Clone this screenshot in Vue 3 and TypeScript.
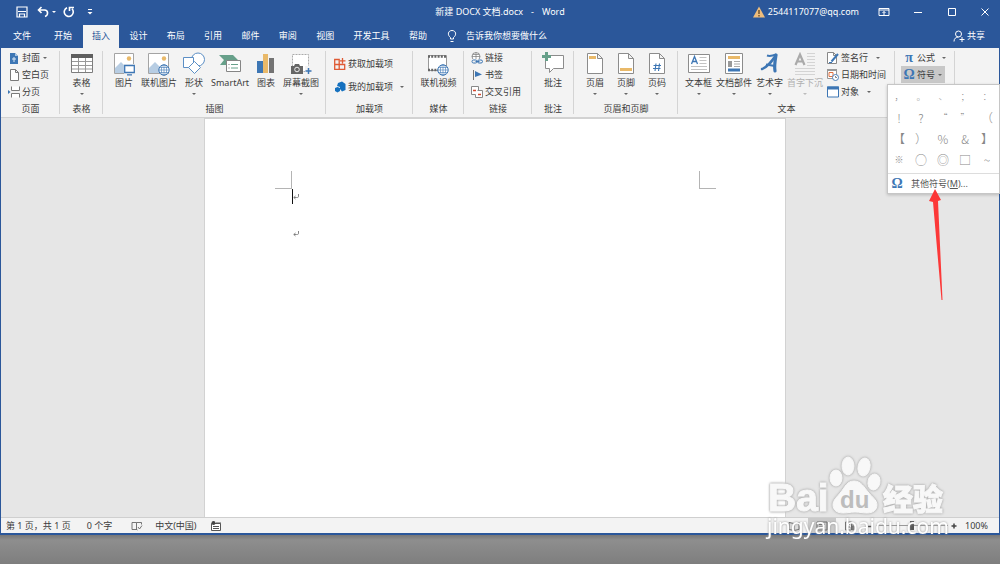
<script setup lang="ts">
import { ref } from 'vue'

interface Tool {
  icon: string
  label: string
  caret?: boolean
  disabled?: boolean
}

const activeTab = ref('插入')
const leadTabs: string[] = ['文件', '开始']
const tabs: string[] = ['插入', '设计', '布局', '引用', '邮件', '审阅', '视图', '开发工具', '帮助']

const pageTools: Tool[] = [
  { icon: 'cover', label: '封面', caret: true },
  { icon: 'blank', label: '空白页' },
  { icon: 'break', label: '分页' },
]
const tableTools: Tool[] = [{ icon: 'table', label: '表格', caret: true }]
const illustrationTools: Tool[] = [
  { icon: 'picture', label: '图片' },
  { icon: 'online-picture', label: '联机图片' },
  { icon: 'shapes', label: '形状', caret: true },
  { icon: 'smartart', label: 'SmartArt' },
  { icon: 'chart', label: '图表' },
  { icon: 'screenshot', label: '屏幕截图', caret: true },
]
const addinTools: Tool[] = [
  { icon: 'store', label: '获取加载项' },
  { icon: 'addins', label: '我的加载项', caret: true },
]
const mediaTools: Tool[] = [{ icon: 'video', label: '联机视频' }]
const linkTools: Tool[] = [
  { icon: 'link', label: '链接' },
  { icon: 'bookmark', label: '书签' },
  { icon: 'crossref', label: '交叉引用' },
]
const commentTools: Tool[] = [{ icon: 'comment', label: '批注' }]
const headerTools: Tool[] = [
  { icon: 'header', label: '页眉', caret: true },
  { icon: 'footer', label: '页脚', caret: true },
  { icon: 'pagenum', label: '页码', caret: true },
]
const textTools: Tool[] = [
  { icon: 'textbox', label: '文本框', caret: true },
  { icon: 'parts', label: '文档部件', caret: true },
  { icon: 'wordart', label: '艺术字', caret: true },
  { icon: 'dropcap', label: '首字下沉', caret: true, disabled: true },
]
const textSideTools: Tool[] = [
  { icon: 'signature', label: '签名行', caret: true },
  { icon: 'datetime', label: '日期和时间' },
  { icon: 'object', label: '对象', caret: true },
]

interface Group {
  name: string
  kind: string
  big?: Tool[]
  small?: Tool[]
}

const groups: Group[] = [
  { name: '页面', kind: 'pages', small: pageTools },
  { name: '表格', kind: 'tables', big: tableTools },
  { name: '插图', kind: 'illustrations', big: illustrationTools },
  { name: '加载项', kind: 'addins', small: addinTools },
  { name: '媒体', kind: 'media', big: mediaTools },
  { name: '链接', kind: 'links', small: linkTools },
  { name: '批注', kind: 'comments', big: commentTools },
  { name: '页眉和页脚', kind: 'headers', big: headerTools },
  { name: '文本', kind: 'text', big: textTools, small: textSideTools },
]

const symbols: string[] = [
  '，', '。', '、', '；', '：',
  '!', '?', '“', '”', '（',
  '【', '）', '%', '&', '】',
  '※', '○', '◎', '□', '~',
]
const tinySymbols = ['，', '。', '、', '；', '：', '“', '”', '※']
const zoomLevel = ref(100)
</script>

<template>
  <svg class="sprite" aria-hidden="true">
    <symbol id="i-cover" viewBox="0 0 12 12"><path d="M2 1h5l3 3v8H2z" fill="#3d76b4" /><path d="M7 1v3h3" fill="#a9c5e2" /><path d="M4 7h4M6 5v5" stroke="#dbe8f5" fill="none" /></symbol>
    <symbol id="i-blank" viewBox="0 0 12 12"><path d="M2.500.5h5l3 3v8h-8zM7.500.5v3h3" fill="#fff" stroke="#7a7a7a" /></symbol>
    <symbol id="i-break" viewBox="0 0 12 12"><path d="M3.500.5v4h8v-4M3.500 11.500v-4h8v4" fill="#fff" stroke="#7a7a7a" /><path d="M0 4l2.500 2L0 8z" fill="#3d76b4" /></symbol>
    <symbol id="i-table" viewBox="0 0 22 24"><path d="M.5 2.500h21v18H.5z" fill="#fff" stroke="#7d7d7d" /><path d="M0 2h22v4H0z" fill="#5f5f5f" /><path d="M1 9.500h20M1 13.500h20M1 17h20M7.500 6v14M14.500 6v14" stroke="#999" fill="none" /></symbol>
    <symbol id="i-picture" viewBox="0 0 22 24"><path d="M1.500 1.500h19v20h-19z" fill="#fff" stroke="#a4a4a4" /><path d="M2 21v-5l6-6 5 5v6z" fill="#b7cde3" /><circle cx="16" cy="6.500" r="2.200" fill="#e9b969" /><path d="M11 12h11v10H11z" fill="#f3f3f3" /><path d="M11.700 13.500h9.600v7h-9.600zM14 22.800h5" fill="#fff" stroke="#3d76b4" stroke-width="1.300" /></symbol>
    <symbol id="i-globe" viewBox="0 0 12 12"><circle cx="6" cy="6" r="5.200" fill="#fff" stroke="#3d76b4" /><path d="M6 .8v10.400M.8 6h10.400M1.700 3.500h8.600M1.700 8.500h8.600" stroke="#3d76b4" stroke-width=".6" /><ellipse cx="6" cy="6" rx="2.600" ry="5.200" fill="none" stroke="#3d76b4" stroke-width=".6" /></symbol>
    <symbol id="i-online-picture" viewBox="0 0 22 24"><path d="M.5 1.500h20v20H.5z" fill="#fff" stroke="#a4a4a4" /><path d="M1 21v-5l6-6 5 5v6z" fill="#b7cde3" /><circle cx="16" cy="6.500" r="2.200" fill="#e9b969" /><use href="#i-globe" x="10" y="12" width="12" height="12" /></symbol>
    <symbol id="i-shapes" viewBox="0 0 22 24"><circle cx="15" cy="7.500" r="6.500" fill="#fff" stroke="#5c8fc5" /><path d="M.5 5.500h10v10H.5z" fill="#fff" stroke="#5c8fc5" /><path d="M11.500 9.500l6 6-6 6-6-6z" fill="#fff" stroke="#5c8fc5" /></symbol>
    <symbol id="i-smartart" viewBox="0 0 22 24"><path d="M0 3h14l5 5H8v5H1l4-5z" fill="#67a08a" /><path d="M7.500 8.500h14v11h-14z" fill="#fff" stroke="#858585" /><path d="M12 12.500h7M12 16h7" stroke="#67a08a" /><path d="M9.500 12.500h1M9.500 16h1" stroke="#777" /></symbol>
    <symbol id="i-chart" viewBox="0 0 22 24"><path d="M2 9h6v12H2z" fill="#3d76b4" /><path d="M8 2h5v19H8z" fill="#e9b969" /><path d="M14 6h5v15h-5z" fill="#737373" /></symbol>
    <symbol id="i-screenshot" viewBox="0 0 22 24"><path d="M2.500 2.500h16v17h-16z" fill="#fff" stroke="#aaa" stroke-dasharray="2 1" /><path d="M1 14h3l1-2h4l1 2h3v8H1z" fill="#666" /><circle cx="7" cy="17.500" r="2.300" fill="#666" stroke="#eee" /><path d="M15 14h7v9h-7z" fill="#f3f3f3" /><path d="M15.500 19h6M18.500 16v6" stroke="#3d76b4" stroke-width="1.500" /></symbol>
    <symbol id="i-store" viewBox="0 0 12 12"><path d="M.7 1.500h4.500v10H.7zM.7 6.500h10v5H.7zM8.500 0v5.500M6 2.800h5.500" fill="none" stroke="#df5a34" stroke-width="1.300" /></symbol>
    <symbol id="i-addins" viewBox="0 0 12 12"><path d="M4 2l4-1.500L11.500 3v6L8 10.500 6 8V6L3 5z" fill="#1571bf" /><path d="M1 7l2.500-1L6 7v3l-2.500 1.500L1 10z" fill="#1571bf" /></symbol>
    <symbol id="i-video" viewBox="0 0 22 24"><path d="M1.500 3.500h18v15h-18z" fill="#fff" stroke="#999" /><path d="M1 4.500h19M1 18h19" stroke="#666" stroke-width="2.500" stroke-dasharray="2 1.200" /><use href="#i-globe" x="10" y="12" width="12" height="12" /></symbol>
    <symbol id="i-link" viewBox="0 0 12 12"><circle cx="5" cy="4.500" r="4" fill="#fff" stroke="#777" stroke-width=".8" /><path d="M5 .5v8M1 4.500h8M2 2.500h6" stroke="#777" stroke-width=".7" /><path d="M1 7h10v5H1z" fill="#f1f1f1" /><rect x="1" y="8" width="5" height="3" rx="1.500" fill="none" stroke="#3d76b4" /><rect x="6.500" y="8" width="5" height="3" rx="1.500" fill="none" stroke="#3d76b4" /><path d="M4.500 9.500h4" stroke="#3d76b4" /></symbol>
    <symbol id="i-bookmark" viewBox="0 0 12 12"><path d="M2.500 1v10" stroke="#777" /><path d="M4 2l7 3.500L4 8z" fill="#3d76b4" /></symbol>
    <symbol id="i-crossref" viewBox="0 0 12 12"><path d="M.5.5h7v8h-7z" fill="#fff" stroke="#888" /><path d="M6.500 4.500h5v7h-7v-3" fill="#fff" stroke="#888" /><path d="M2 4.500h3M7 8.500h3" stroke="#d8492f" stroke-width="1.500" /></symbol>
    <symbol id="i-comment" viewBox="0 0 22 24"><path d="M3.500 3.500h18v13h-10l-4 4v-4h-4z" fill="#fff" stroke="#8c8c8c" /><path d="M4.500 0v9M0 4.500h9" stroke="#67a08a" stroke-width="3" /></symbol>
    <symbol id="i-sheet" viewBox="0 0 22 24"><path d="M3.500 1.500h10l5 5v15h-15zM13.500 1.500v5h5" fill="#fff" stroke="#8c8c8c" /></symbol>
    <symbol id="i-header" viewBox="0 0 22 24"><use href="#i-sheet" width="22" height="24" /><path d="M5 4h7v3H5z" fill="#e9b969" /></symbol>
    <symbol id="i-footer" viewBox="0 0 22 24"><use href="#i-sheet" width="22" height="24" /><path d="M5 16h12v3H5z" fill="#e9b969" /></symbol>
    <symbol id="i-pagenum" viewBox="0 0 22 24"><use href="#i-sheet" width="22" height="24" /><path d="M10 11.500L9 19M13.500 11.500l-1 7.500M7.500 13.500h7.500M7 16.500h7.500" stroke="#3d76b4" stroke-width="1.100" /></symbol>
    <symbol id="i-textbox" viewBox="0 0 22 24"><path d="M.5 2.500h21v18H.5z" fill="#fff" stroke="#8c8c8c" /><path d="M3.500 12L6.500 4.500l3 7.500M4.500 9.500h4" fill="none" stroke="#3d76b4" stroke-width="1.300" /><path d="M11.500 5.500h7M11.500 8.500h7M11.500 11.500h7M3 14.500h16M3 17.500h16" stroke="#c2c2c2" /></symbol>
    <symbol id="i-parts" viewBox="0 0 22 24"><path d="M2.500 1.500h17v20h-17z" fill="#fff" stroke="#8c8c8c" /><path d="M5 4h12v3H5z" fill="#e9b969" /><path d="M5 9h4v6H5z" fill="#999" /><path d="M11 9.500h6M11 12h6M11 14.500h6" stroke="#aaa" /><path d="M5 16.500h12v3H5z" fill="#3d76b4" /></symbol>
    <symbol id="i-wordart" viewBox="0 0 22 24"><path d="M3 17C9 15 13 9 17 3" fill="none" stroke="#3d76b4" stroke-width="2.400" stroke-linecap="round" /><path d="M17 3c-1 6-2 11-1 16" fill="none" stroke="#3d76b4" stroke-width="3.200" stroke-linecap="round" /><path d="M8 3.500c3 1 5 .5 9-1M7 12.500l9 1.500" stroke="#3d76b4" stroke-width="2" fill="none" /></symbol>
    <symbol id="i-dropcap" viewBox="0 0 22 24"><path d="M1.500 13L6 2.500 10.500 13M3 9.500h6" fill="none" stroke="#aaa" stroke-width="2.200" /><path d="M13 1.500h8M13 4.500h8M13 7.500h8M13 10.500h8M13 13.500h8M1 16.500h20M1 19.500h20M1 22.500h20" stroke="#d4d4d4" /></symbol>
    <symbol id="i-signature" viewBox="0 0 12 12"><path d="M.5.5h6l3 3v8h-9zM6.500.5v3h3" fill="#fff" stroke="#888" /><path d="M4.500 9.500L11 2" stroke="#3d76b4" stroke-width="2" /><path d="M2 10.500h3" stroke="#3d76b4" /></symbol>
    <symbol id="i-datetime" viewBox="0 0 12 12"><path d="M.5.500h9v9h-9z" fill="#fff" stroke="#999" /><path d="M0 0h10v2H0z" fill="#999" /><path d="M2 3.500h4v4H2z" fill="#fff" stroke="#e2703f" /><circle cx="8.500" cy="8.500" r="3" fill="#fff" stroke="#3d76b4" stroke-width=".9" /><path d="M8.500 7v1.500H10" fill="none" stroke="#666" stroke-width=".8" /></symbol>
    <symbol id="i-object" viewBox="0 0 12 12"><path d="M.5 1h11v10H.5z" fill="#fff" stroke="#3d76b4" /><path d="M0 .5h12v3H0z" fill="#3d76b4" /></symbol>
  </svg>

  <div class="desktop">
    <div class="window">
      <header class="titlebar">
        <div class="quick">
          <button class="quick-btn" aria-label="保存"><svg width="12" height="12" viewBox="0 0 12 12" fill="none" stroke="#fff" stroke-width="1.200"><path d="M1 1h10v10H1zM2 5.500h8M3.500 11V8h5v3" /></svg></button>
          <button class="quick-btn undo" aria-label="撤消"><svg width="12" height="12" viewBox="0 0 12 12" fill="none" stroke="#fff" stroke-width="1.600"><path d="M4.500 1L1.500 4l3 3M2 4h5.500c4 0 4 5.500.5 6.500" /></svg><i class="caret"></i></button>
          <button class="quick-btn redo" aria-label="重复"><svg width="12" height="12" viewBox="0 0 12 12" fill="none" stroke="#fff" stroke-width="1.600"><path d="M4 1.800a4.500 4.500 0 1 0 5 1M6.500 5V1.500H11" /></svg></button>
          <button class="quick-btn" aria-label="自定义快速访问工具栏"><svg width="6" height="6" viewBox="0 0 6 6"><path d="M1 .5h4" stroke="#fff" /><path d="M.5 3h5L3 5.500z" fill="#fff" /></svg></button>
        </div>
        <div class="doc-title"><span>新建 DOCX 文档.docx</span><span>-</span><span>Word</span></div>
        <div class="account">
          <svg class="warn" width="12" height="12" viewBox="0 0 12 12"><path d="M6 .5L12 11.500H0z" fill="#eebd7c" /><path d="M6 4v4M6 9v1.500" stroke="#5c4526" stroke-width="1.300" /></svg>
          <span class="email">2544117077@qq.com</span>
          <button class="win-btn" aria-label="功能区显示选项"><svg width="12" height="10" viewBox="0 0 12 10" fill="none" stroke="#fff"><path d="M1 1.500h10v7H1zM1 3h10M6 8V4.500M4.500 6L6 4.500 7.500 6" /></svg></button>
          <button class="win-btn" aria-label="最小化"><svg width="10" height="10" viewBox="0 0 10 10"><path d="M1 5.500h8" stroke="#fff" /></svg></button>
          <button class="win-btn" aria-label="最大化"><svg width="10" height="10" viewBox="0 0 10 10"><path d="M1.500 1.500h7v7h-7z" fill="none" stroke="#fff" /></svg></button>
          <button class="win-btn" aria-label="关闭"><svg width="10" height="10" viewBox="0 0 10 10"><path d="M1.500 1.500l7 7M8.500 1.500l-7 7" stroke="#fff" /></svg></button>
        </div>
      </header>

      <nav class="tabbar">
        <div class="lead">
          <button v-for="t in leadTabs" :key="t" class="tab" :class="{ active: activeTab === t }" @click="activeTab = t">{{ t }}</button>
        </div>
        <div class="tabs">
          <button v-for="t in tabs" :key="t" class="tab" :class="{ active: activeTab === t }" @click="activeTab = t">{{ t }}</button>
        </div>
        <button class="tell">
          <svg width="10" height="14" viewBox="0 0 10 14" fill="none" stroke="#fff"><path d="M3.500 10V8.500C0 6 1 1.500 5 1.500s5 4.500 1.500 7V10zM3.500 12.500h3" /></svg>
          告诉我你想要做什么
        </button>
        <button class="share">
          <svg width="12" height="12" viewBox="0 0 12 12" fill="none" stroke="#fff"><circle cx="5.500" cy="4" r="3" /><path d="M1 11.500c0-3 2-4.500 4.500-4.500M9 7v5M6.500 9.500h5" /></svg>
          共享
        </button>
      </nav>

      <div class="ribbon">
        <section v-for="g in groups" :key="g.kind" class="group" :class="g.kind">
          <div class="tools">
            <button v-for="t in g.big" :key="t.label" class="big" :class="{ off: t.disabled }" :disabled="t.disabled">
              <svg width="22" height="24"><use :href="'#i-' + t.icon" width="22" height="24" /></svg>
              <span>{{ t.label }}</span>
              <i v-if="t.caret" class="caret"></i>
            </button>
            <div v-if="g.small" class="stack">
              <button v-for="t in g.small" :key="t.label" class="small">
                <svg width="12" height="12"><use :href="'#i-' + t.icon" width="12" height="12" /></svg>
                <span>{{ t.label }}</span>
                <i v-if="t.caret" class="caret"></i>
              </button>
            </div>
          </div>
          <div class="group-name">{{ g.name }}</div>
        </section>
        <section class="group symbols">
          <div class="stack">
            <button class="small"><b class="greek">π</b><span>公式</span><i class="caret"></i></button>
            <button class="small pressed"><b class="greek">Ω</b><span>符号</span><i class="caret"></i></button>
          </div>
        </section>
        <div class="symbol-menu">
          <div class="symbol-grid">
            <button v-for="s in symbols" :key="s" class="symbol" :class="{ tiny: tinySymbols.includes(s) }">{{ s }}</button>
          </div>
          <button class="more"><b class="greek">Ω</b><span>其他符号(<u>M</u>)...</span></button>
        </div>
      </div>

      <main class="workspace">
        <article class="page">
          <div class="margins"><i class="mark left"></i><i class="mark right"></i></div>
          <p v-for="n in 2" :key="n" class="para" :class="{ current: n === 1 }">
            <svg width="6" height="6" viewBox="0 0 6 6" fill="none" stroke="#777" stroke-width=".9"><path d="M5.500 0v2.500c0 1-1 1-2 1H.8M2.500 2L.8 3.500l1.700 1.500" /></svg>
          </p>
        </article>
      </main>

      <footer class="status">
        <span class="pages-count">第 1 页，共 1 页</span>
        <span class="words">0 个字</span>
        <svg class="proof" width="12" height="10" viewBox="0 0 12 10" fill="none" stroke="#666" stroke-width=".9"><path d="M5.500 9V1.500H1V8.500h4.500l1 .5M5.500 1.500h5v2M7 6l1.500 2L11 4.500" /></svg>
        <span>中文(中国)</span>
        <svg class="macro" width="10" height="10" viewBox="0 0 10 10"><path d="M.5 2.500h9v7h-9z" fill="#fff" stroke="#555" /><circle cx="2.500" cy="2" r="2" fill="#444" /><path d="M5 2h5M2 5.500h6M2 7.500h6" stroke="#555" /></svg>
        <div class="views">
          <button class="view" aria-label="阅读视图"><svg width="12" height="10" viewBox="0 0 12 10" fill="#ddd" stroke="#666"><path d="M1 1.500l5 1 5-1v7l-5 1-5-1zM6 2.500v7" /></svg></button>
          <button class="view on" aria-label="页面视图"><svg width="12" height="10" viewBox="0 0 12 10" fill="none" stroke="#666"><path d="M1 1h10v8H1zM3 3.500h6M3 6h6" /></svg></button>
          <button class="view" aria-label="Web 版式视图"><svg width="12" height="10" viewBox="0 0 12 10" fill="none" stroke="#666"><path d="M1.500 1h6v8h-6zM3 3.500h3M3 6h3M9 2v3" /><circle cx="9" cy="7" r="2" fill="#777" /></svg></button>
          <button class="step" aria-label="缩小"><svg width="12" height="8" viewBox="0 0 12 8"><path d="M4 4.500h4" stroke="#444" stroke-width="1.500" /></svg></button>
          <input v-model="zoomLevel" class="zoom" type="range" min="0" max="200" aria-label="缩放" />
          <button class="step" aria-label="放大"><svg width="12" height="8" viewBox="0 0 12 8"><path d="M3.500 4h5M6 1.500v5" stroke="#444" stroke-width="1.500" /></svg></button>
          <span class="percent">{{ zoomLevel }}%</span>
        </div>
      </footer>
    </div>

    <svg class="arrow" width="14" height="112" viewBox="0 0 14 112" aria-hidden="true"><path d="M5 0L11 11 8 12l4.500 99h-1L3 13 -1 12z" fill="#fc3838" /></svg>

    <svg class="watermark" width="184" height="86" viewBox="0 0 184 86">
      <g class="outlined">
        <text x="2" y="57" class="brand">Bai</text>
        <ellipse cx="70" cy="24" rx="6" ry="8" />
        <ellipse cx="82" cy="12" rx="6" ry="9" />
        <ellipse cx="98" cy="13" rx="6" ry="9" transform="rotate(12 98 13)" />
        <ellipse cx="108" cy="28" rx="6" ry="8" transform="rotate(12 108 28)" />
        <path d="M88 27c-7 0-9 6-13 11s-8 8-8 13 4 8 10 8c5 0 7-1 12-1s7 1 12 1c6 0 10-3 10-8s-5-8-9-13-7-11-14-11z" />
        <text x="117" y="56" class="brand-cn">经验</text>
      </g>
      <text x="74" y="54" class="du">du</text>
      <text x="1" y="80" class="site">jingyan.baidu.com</text>
    </svg>
  </div>
</template>

<style>
body {
  margin: 0;
  overflow: hidden;
}
</style>

<style scoped>
.sprite {
  position: absolute;
  width: 0;
  height: 0;
}

.desktop {
  position: relative;
  box-sizing: border-box;
  height: 100vh;
  padding-bottom: 29px;
  background: linear-gradient(to top, #7e7e7e, #8e8e8e 24px, #777 29px);
  color: #3b3b3b;
  font: 9px/14px "Noto Sans", "Noto Sans CJK SC", sans-serif;
}

button {
  margin: 0;
  padding: 0;
  border: 0;
  background: none;
  color: inherit;
  font: inherit;
  white-space: nowrap;
}

svg {
  display: block;
  flex: none;
}

.window {
  display: flex;
  flex-direction: column;
  box-sizing: border-box;
  height: 100%;
  border: solid #2b579a;
  border-width: 0 1px 2px;
  background: #e6e6e6;
}

.caret {
  flex: none;
  width: 0;
  border: 2px solid transparent;
  border-top-color: #666;
  border-bottom: 0;
}

.titlebar {
  display: grid;
  flex: none;
  box-sizing: border-box;
  grid-template-columns: 1fr auto 1fr;
  align-items: center;
  height: 25px;
  padding-bottom: 1px;
  background: #2b579a;
  color: #fff;
}

.doc-title {
  display: flex;
  gap: 8px;
}

.quick {
  display: flex;
  align-items: center;
  padding-left: 15px;
}

.quick-btn {
  display: flex;
  align-items: center;
}

.undo {
  gap: 3px;
  margin: 0 7px 0 9px;
}

.undo .caret {
  border-top-color: #fff;
}

.redo {
  margin-right: 12px;
}

.account {
  display: flex;
  align-items: center;
  justify-content: flex-end;
  gap: 3px;
}

.email {
  margin-right: 6px;
}

.win-btn {
  display: flex;
  justify-content: center;
  width: 31px;
}

.win-btn:last-child {
  width: 29px;
}

.tabbar {
  display: flex;
  flex: none;
  height: 23px;
  padding-left: 3px;
  background: #2b579a;
  color: #fff;
}

.lead {
  display: flex;
  gap: 5px;
  margin-right: 2px;
}

.tabs {
  display: flex;
  justify-content: space-between;
  width: 353px;
}

.tab {
  padding: 0 9px 2px;
}

.tab.active {
  background: #f3f3f3;
  color: #2b579a;
}

.tell,
.share {
  display: flex;
  align-items: center;
  gap: 9px;
  margin-left: 11px;
  padding-bottom: 2px;
}

.share {
  gap: 2px;
  margin: 0 14px 0 auto;
}

.ribbon {
  position: relative;
  display: flex;
  flex: none;
  box-sizing: border-box;
  height: 70px;
  border-bottom: 1px solid #d2d2d2;
  background: #f3f3f3;
}

.group {
  position: relative;
  display: flex;
  flex-direction: column;
  box-sizing: border-box;
}

.group::after {
  position: absolute;
  top: 3px;
  right: 0;
  bottom: 3px;
  width: 1px;
  background: #d4d4d4;
  content: "";
}

.tools {
  display: flex;
  flex: 1;
}

.group-name {
  height: 15px;
  line-height: 14px;
  text-align: center;
}

.big {
  display: flex;
  flex-direction: column;
  align-items: center;
  padding-top: 4px;
}

.big .caret {
  margin-top: 3px;
}

.off {
  color: #b0b0b0;
}

.off .caret {
  border-top-color: #bbb;
}

.stack {
  display: flex;
  flex-direction: column;
  align-items: flex-start;
  padding-top: 1px;
}

.small {
  display: flex;
  align-items: center;
  gap: 2px;
  height: 17px;
}

.small .caret {
  margin-left: 1px;
}

.pages { width: 59px; }
.pages .tools { padding-left: 7px; }
.tables { width: 43px; }
.tables .tools { justify-content: center; }
.illustrations { width: 223px; }
.illustrations .tools { gap: 6px; padding-left: 10px; }
.addins { width: 87px; }
.addins .tools { padding-left: 8px; }
.addins .stack { gap: 6px; padding-top: 7px; }
.addins .caret { margin-left: 5px; }
.media { width: 51px; }
.media .tools { justify-content: center; }
.links { width: 68px; }
.links .tools { padding-left: 7px; }
.comments { width: 42px; }
.comments .tools { justify-content: center; }
.headers { width: 104px; }
.headers .tools { gap: 9px; padding-left: 10px; }
.text { width: 217px; }
.text .tools { gap: 4px; padding-left: 7px; }
.text .small .caret { margin-left: 6px; }
.symbols { width: 60px; padding-left: 6px; }

.symbols .small {
  padding: 0 3px 0 2px;
}

.symbols .small:first-child .caret {
  margin-left: 5px;
}

.symbols .pressed {
  background: #c8c8c8;
}

.greek {
  width: 12px;
  color: #3d76b4;
  font: bold 14px/14px "Liberation Serif", serif;
  text-align: center;
}

.symbol-menu {
  position: absolute;
  z-index: 2;
  top: 36px;
  right: -1px;
  box-sizing: border-box;
  width: 113px;
  border: 1px solid #c6c6c6;
  background: #fff;
  box-shadow: 0 1px 3px #0003;
}

.symbol-grid {
  display: grid;
  grid-template-columns: repeat(5, 22px);
  grid-auto-rows: 21px;
  height: 88px;
  padding-top: 1px;
  box-sizing: border-box;
}

.symbol {
  color: #888;
  font: 300 12px/20px "Noto Sans CJK SC", sans-serif;
}

.symbol.tiny {
  font-size: 9px;
}

.more {
  display: flex;
  align-items: center;
  gap: 8px;
  width: 100%;
  height: 20px;
  padding-left: 3px;
  border-top: 1px solid #ddd;
  color: #555;
}

.workspace {
  display: flex;
  flex: 1;
  justify-content: center;
  min-height: 0;
  padding-right: 10px;
}

.page {
  box-sizing: border-box;
  width: 582px;
  padding: 52px 69px 0 70px;
  border: 1px solid #d2d2d2;
  border-bottom: 0;
  background: #fff;
}

.margins {
  display: flex;
  justify-content: space-between;
}

.mark {
  box-sizing: border-box;
  width: 17px;
  height: 18px;
  border-bottom: 1px solid #b4b4b4;
}

.mark.left {
  border-right: 1px solid #b4b4b4;
}

.mark.right {
  border-left: 1px solid #b4b4b4;
}

.para {
  display: flex;
  align-items: center;
  height: 15px;
  margin: 0 0 22px 17px;
  border-left: 1px solid transparent;
}

.para.current {
  border-left-color: #111;
}

.status {
  display: flex;
  flex: none;
  align-items: center;
  height: 15px;
  padding: 0 11px 0 5px;
  border-top: 1px solid #cfcfcf;
  background: #f3f3f3;
}

.words {
  margin-left: 16px;
}

.proof {
  margin: 0 12px 0 19px;
}

.macro {
  margin-left: 14px;
}

.views {
  display: flex;
  align-items: center;
  margin-left: auto;
}

.view {
  display: flex;
  align-items: center;
  justify-content: center;
  width: 28px;
  height: 15px;
}

.view.on {
  background: #cacaca;
}

.step {
  width: 12px;
}

.zoom {
  width: 72px;
  height: 9px;
  margin: 0;
  appearance: none;
  background: linear-gradient(#999, #999) center / 100% 1px no-repeat;
}

.zoom::-webkit-slider-thumb {
  width: 4px;
  height: 9px;
  appearance: none;
  background: #555;
}

.percent {
  margin-left: 5px;
}

.arrow {
  position: absolute;
  z-index: 3;
  top: 189px;
  right: 56px;
  overflow: visible;
}

.watermark {
  position: absolute;
  right: 50px;
  bottom: 24px;
  overflow: visible;
  pointer-events: none;
}

.outlined {
  fill: #f8f8f8;
  stroke: #f8f8f8;
  stroke-width: 1px;
  filter: drop-shadow(0 0 1px #aaa) drop-shadow(0 0 1px #ccc);
}

.brand {
  font: bold 39px "Liberation Sans", sans-serif;
}

.brand-cn {
  font: 900 30px "Noto Sans CJK SC", sans-serif;
}

.du {
  fill: #bdbdbd;
  font: bold 24px "Liberation Sans", sans-serif;
}

.site {
  fill: #fff;
  font: 21px "Noto Sans", sans-serif;
  filter: drop-shadow(0 0 1px #999);
}
</style>
